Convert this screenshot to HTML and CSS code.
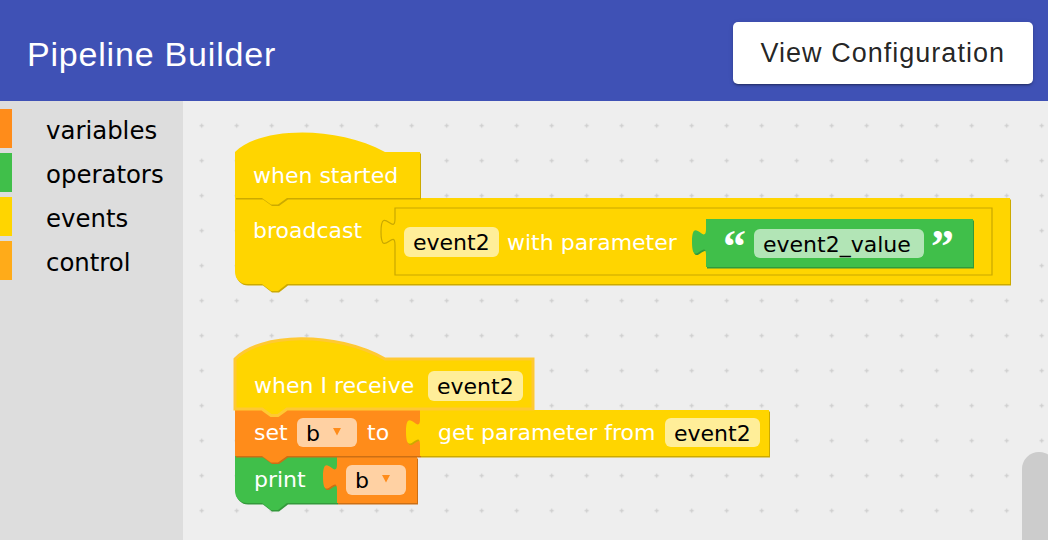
FILE: index.html
```html
<!DOCTYPE html>
<html lang="en">
<head>
<meta charset="utf-8">
<title>Pipeline Builder</title>
<link rel="stylesheet" href="styles.css">
</head>
<body>
<header class="appbar">
  <h1 class="title">Pipeline Builder</h1>
  <button class="cfg-btn" type="button">View Configuration</button>
</header>
<main class="editor">
  <nav class="toolbox">
    <div class="cat"><span class="swatch swatch-vars"></span><span class="label">variables</span></div>
    <div class="cat"><span class="swatch swatch-ops"></span><span class="label">operators</span></div>
    <div class="cat"><span class="swatch swatch-events"></span><span class="label">events</span></div>
    <div class="cat"><span class="swatch swatch-control"></span><span class="label">control</span></div>
  </nav>
  <section class="workspace">
    <svg class="canvas" width="865" height="439" viewBox="0 0 865 439" xmlns="http://www.w3.org/2000/svg">
      <defs>
        <pattern id="grid" patternUnits="userSpaceOnUse" x="184.2" y="108.2" width="35" height="35">
          <path class="grid-dot" d="M15.5 17.5h4 M17.5 15.5v4"/>
        </pattern>
      </defs>
      <g transform="translate(-183,-101)">
        <rect x="183" y="101" width="865" height="439" fill="url(#grid)"/>

        <!-- stack 1 -->
        <path class="dark-y" transform="translate(1,1.5)" d="M235 198 H262 l9 6.5 h7 l9 -6.5 H1010 V284 H287 l-9 7 h-7 l-9 -7 H247 a12 12 0 0 1 -12 -12 Z"/>
        <path class="fill-y" d="M235 198 H262 l9 6.5 h7 l9 -6.5 H1010 V284 H287 l-9 7 h-7 l-9 -7 H247 a12 12 0 0 1 -12 -12 Z"/>
        <path class="dark-y" transform="translate(1,1.5)" d="M235 152 c25 -25 100 -27 150 0 H420 V198 H287 l-9 6.5 h-7 l-9 -6.5 H235 Z"/>
        <path class="fill-y" d="M235 152 c25 -25 100 -27 150 0 H420 V198 H287 l-9 6.5 h-7 l-9 -6.5 H235 Z"/>
        <text class="bt" x="253" y="183">when started</text>
        <text class="bt" x="253" y="238">broadcast</text>

        <path class="inner-y" d="M395 208 H992 V275 H395 V245 c0 -17.5 -14 14 -14 -13.1 s14 4.4 14 -13.1 V208 Z"/>
        <rect class="pill" x="404" y="227" width="95" height="30" rx="6"/>
        <text class="ft" x="413" y="250">event2</text>
        <text class="bt" x="507" y="250">with parameter</text>

        <path class="dark-g" transform="translate(1,1.5)" d="M706 219 H973 V267 H706 V255 c0 -17.5 -14 14 -14 -13.1 s14 4.4 14 -13.1 V219 Z"/>
        <path class="fill-g" d="M706 219 H973 V267 H706 V255 c0 -17.5 -14 14 -14 -13.1 s14 4.4 14 -13.1 V219 Z"/>
        <text class="quote" x="723" y="262">“</text>
        <rect class="pill" x="754" y="229" width="170" height="29" rx="6"/>
        <text class="ft" x="763" y="252">event2_value</text>
        <text class="quote" x="931" y="262">”</text>

        <!-- stack 2 -->
        <path class="dark-g" transform="translate(1,1.5)" d="M235 456 H262 l9 6.5 h7 l9 -6.5 H337 V503 H287 l-9 7 h-7 l-9 -7 H247 a12 12 0 0 1 -12 -12 Z"/>
        <path class="fill-g" d="M235 456 H262 l9 6.5 h7 l9 -6.5 H337 V503 H287 l-9 7 h-7 l-9 -7 H247 a12 12 0 0 1 -12 -12 Z"/>
        <text class="bt" x="254" y="487">print</text>

        <path class="dark-o" transform="translate(1,1.5)" d="M337 457 H417 V503 H337 V490 c0 -17.5 -14 14 -14 -13.1 s14 4.4 14 -13.1 V457 Z"/>
        <path class="fill-o" d="M337 457 H417 V503 H337 V490 c0 -17.5 -14 14 -14 -13.1 s14 4.4 14 -13.1 V457 Z"/>
        <rect class="pill" x="346" y="465" width="60" height="30" rx="6"/>
        <text class="ft" x="355" y="488">b</text>
        <path class="arrow" d="M382 475 h8 l-4 7.5 Z"/>

        <path class="dark-o" transform="translate(1,1.5)" d="M235 409 H262 l9 6.5 h7 l9 -6.5 H420 V456 H287 l-9 6.5 h-7 l-9 -6.5 H235 Z"/>
        <path class="fill-o" d="M235 409 H262 l9 6.5 h7 l9 -6.5 H420 V456 H287 l-9 6.5 h-7 l-9 -6.5 H235 Z"/>
        <text class="bt" x="254" y="440">set</text>
        <rect class="pill" x="297" y="418" width="60" height="29" rx="6"/>
        <text class="ft" x="306" y="441">b</text>
        <path class="arrow" d="M333 428 h8 l-4 7.5 Z"/>
        <text class="bt" x="367" y="440">to</text>

        <path class="dark-y" transform="translate(1,1.5)" d="M420 410 H769 V456 H420 V445 c0 -17.5 -14 14 -14 -13.1 s14 4.4 14 -13.1 V410 Z"/>
        <path class="fill-y" d="M420 410 H769 V456 H420 V445 c0 -17.5 -14 14 -14 -13.1 s14 4.4 14 -13.1 V410 Z"/>
        <text class="bt" x="438" y="440">get parameter from</text>
        <rect class="pill" x="665" y="418" width="95" height="29" rx="6"/>
        <text class="ft" x="674" y="441">event2</text>

        <path class="fill-y selected" d="M235 359 c25 -26 100 -28 150 0 H533 V409 H287 l-9 6.5 h-7 l-9 -6.5 H235 Z"/>
        <text class="bt" x="254" y="393">when I receive</text>
        <rect class="pill" x="428" y="371" width="95" height="30" rx="6"/>
        <text class="ft" x="437" y="394">event2</text>
      </g>
    </svg>
    <div class="scrollbar"></div>
  </section>
</main>
</body>
</html>
```

FILE: styles.css
```css
html, body {
  margin: 0;
  padding: 0;
  overflow: hidden;
}

body {
  width: 1048px;
  height: 540px;
  font-family: "Liberation Sans", Arial, sans-serif;
  background: #eeeeee;
}

.appbar {
  height: 101px;
  box-sizing: border-box;
  background: #3f51b5;
  display: flex;
  align-items: center;
  justify-content: space-between;
  padding: 0 15px 0 27px;
  position: relative;
  z-index: 2;
}

.title {
  margin: 6px 0 0 0;
  font-size: 34px;
  font-weight: 400;
  letter-spacing: 0.8px;
  line-height: 1;
  color: #ffffff;
}

.cfg-btn {
  margin-top: 5px;
  height: 62px;
  padding: 0 28px;
  border: 0;
  border-radius: 5px;
  background: #ffffff;
  color: rgba(0, 0, 0, 0.87);
  font-family: "Liberation Sans", Arial, sans-serif;
  font-size: 27px;
  letter-spacing: 1.02px;
  box-shadow: 0 3px 1px -2px rgba(0, 0, 0, 0.2), 0 2px 2px 0 rgba(0, 0, 0, 0.14), 0 1px 5px 0 rgba(0, 0, 0, 0.12);
}

.editor {
  display: flex;
  height: 439px;
}

.toolbox {
  width: 183px;
  flex: none;
  background: #dddddd;
  padding-top: 8px;
  box-sizing: border-box;
  display: flex;
  flex-direction: column;
  gap: 5px;
}

.cat {
  display: flex;
  align-items: flex-start;
  height: 39px;
}

.swatch {
  width: 12px;
  height: 39px;
  flex: none;
}

.swatch-vars { background: #ff8c1a; }
.swatch-ops { background: #40bf4a; }
.swatch-events { background: #ffd500; }
.swatch-control { background: #ffab19; }

.label {
  margin-left: 34px;
  padding-top: 2px;
  font-family: "DejaVu Sans", sans-serif;
  font-size: 24.4px;
  line-height: 39px;
  color: #000000;
}

.workspace {
  flex: 1;
  position: relative;
  overflow: hidden;
  background: #eeeeee;
}

.canvas {
  display: block;
}

.grid-dot {
  stroke: #cfcfcf;
  stroke-width: 1.3;
  fill: none;
}

.fill-y { fill: #ffd500; }
.dark-y { fill: #ccaa00; }
.fill-o { fill: #ff8c1a; }
.dark-o { fill: #cc6f14; }
.fill-g { fill: #40bf4a; }
.dark-g { fill: #33993b; }

.inner-y {
  fill: #ffd500;
  stroke: #c9a800;
  stroke-width: 1.2;
}

.selected {
  stroke: #ffc933;
  stroke-width: 3;
}

.pill {
  fill: #ffffff;
  fill-opacity: 0.6;
}

.bt {
  font-family: "DejaVu Sans", sans-serif;
  font-size: 22px;
  fill: #ffffff;
}

.ft {
  font-family: "DejaVu Sans", sans-serif;
  font-size: 22px;
  fill: #000000;
}

.quote {
  font-family: "Liberation Serif", serif;
  font-weight: 700;
  font-size: 46px;
  fill: #ffffff;
}

.arrow {
  fill: #ff8c1a;
}

.scrollbar {
  position: absolute;
  left: 839px;
  top: 351px;
  width: 34px;
  height: 120px;
  border-radius: 17px;
  background: #cccccc;
}
```
